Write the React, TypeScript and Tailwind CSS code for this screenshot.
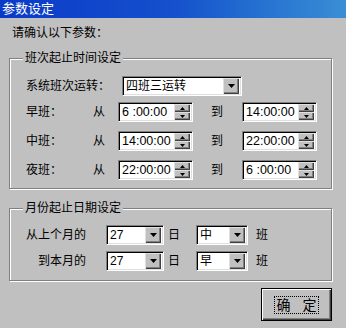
import type { ReactNode } from 'react';

function Group({ title, className, children }: { title: string; className?: string; children: ReactNode }) {
  return (
    <div className={`relative ml-[9px] w-[323px] border border-[#808080] shadow-[inset_1px_1px_0_#fff,1px_1px_0_#fff] ${className ?? ''}`}>
      <span className="absolute left-[13px] top-[-8px] bg-[#c0c0c0] px-[2px] text-[12px] leading-[14px]">{title}</span>
      {children}
    </div>
  );
}

function Arrow({ dir }: { dir: 'up' | 'down' }) {
  return (
    <svg width="5" height="3" viewBox="0 0 5 3">
      {dir === 'up' ? <path d="M2.5 0 L5 3 L0 3 Z" fill="#000" /> : <path d="M0 0 L5 0 L2.5 3 Z" fill="#000" />}
    </svg>
  );
}

const raised = 'bg-[#c0c0c0] shadow-[inset_1px_1px_0_#dfdfdf,inset_-1px_-1px_0_#404040,inset_-2px_-2px_0_#808080]';
const sunken =
  'border border-t-[#808080] border-l-[#808080] border-b-white border-r-white bg-white shadow-[inset_1px_1px_0_#000,inset_-1px_-1px_0_#dfdfdf]';

function SpinBox({ value }: { value: string }) {
  return (
    <div className={`flex h-[20px] w-[75px] items-center p-[2px] pl-[3px] ${sunken}`}>
      <span className="flex-1 text-[12.5px] leading-[14px] whitespace-pre">{value}</span>
      <div className="flex h-[16px] w-[16px] flex-col">
        <div className={`flex h-[8px] items-center justify-center ${raised}`}>
          <Arrow dir="up" />
        </div>
        <div className={`flex h-[8px] items-center justify-center ${raised}`}>
          <Arrow dir="down" />
        </div>
      </div>
    </div>
  );
}

function Combo({ value, width }: { value: string; width: string }) {
  return (
    <div className={`flex h-[20px] ${width} items-center p-[2px] pl-[3px] ${sunken}`}>
      <span className="flex-1 text-[12px] leading-[14px]">{value}</span>
      <div className={`flex h-[16px] w-[16px] items-center justify-center ${raised}`}>
        <svg width="7" height="4" viewBox="0 0 7 4">
          <path d="M0 0 L7 0 L3.5 4 Z" fill="#000" />
        </svg>
      </div>
    </div>
  );
}

const shifts = [
  { name: '早班：', from: '6 :00:00', to: '14:00:00', mt: 'mt-[6px]' },
  { name: '中班：', from: '14:00:00', to: '22:00:00', mt: 'mt-[9px]' },
  { name: '夜班：', from: '22:00:00', to: '6 :00:00', mt: 'mt-[9px]' },
];

export default function App() {
  return (
    <div className="h-[328px] w-[346px] overflow-hidden bg-[#c0c0c0] font-['Liberation_Sans','Noto_Sans_CJK_SC',sans-serif] text-black">
      {/* Title bar */}
      <div className="flex h-[18px] items-center bg-linear-to-r from-[#0a3ac8] via-[#1650cc] to-[#3a8ed4] px-[2px] text-[13px] leading-[14px] text-white">
        参数设定
      </div>

      <div className="mt-[8px] h-[14px] pl-[12px] text-[12px] leading-[14px]">请确认以下参数：</div>

      {/* Shift times */}
      <Group title="班次起止时间设定" className="mt-[18px] h-[131px] pt-[16px]">
        <div className="flex h-[21px] items-center pl-[16px] text-[12px]">
          <span className="w-[96px]">系统班次运转：</span>
          <Combo value="四班三运转" width="w-[120px]" />
        </div>
        {shifts.map((s) => (
          <div key={s.name} className={`flex h-[20px] items-center pl-[16px] text-[12px] ${s.mt}`}>
            <span className="w-[67px]">{s.name}</span>
            <span className="w-[25px]">从</span>
            <SpinBox value={s.from} />
            <span className="w-[49px] pl-[18px]">到</span>
            <SpinBox value={s.to} />
          </div>
        ))}
      </Group>

      {/* Month range */}
      <Group title="月份起止日期设定" className="mt-[19px] h-[73px] pt-[16px]">
        <div className="flex h-[20px] items-center pl-[16px] text-[12px]">
          <span className="w-[80px]">从上个月的</span>
          <Combo value="27" width="w-[58px]" />
          <span className="w-[32px] pl-[4px]">日</span>
          <Combo value="中" width="w-[52px]" />
          <span className="pl-[8px]">班</span>
        </div>
        <div className="mt-[6px] flex h-[20px] items-center pl-[16px] text-[12px]">
          <span className="w-[80px] pl-[12px]">到本月的</span>
          <Combo value="27" width="w-[58px]" />
          <span className="w-[32px] pl-[4px]">日</span>
          <Combo value="早" width="w-[52px]" />
          <span className="pl-[8px]">班</span>
        </div>
      </Group>

      <div className="mt-[7px] pl-[261px]">
        <button className="flex h-[33px] w-[71px] items-center justify-center border border-black bg-[#c0c0c0] shadow-[inset_1px_1px_0_#fff,inset_-1px_-1px_0_#404040,inset_-2px_-2px_0_#808080]">
          <span className="flex h-[18px] w-[45px] items-center justify-center border border-dotted border-black text-[14px] leading-[14px] [word-spacing:8px]">
            确 定
          </span>
        </button>
      </div>
    </div>
  );
}
